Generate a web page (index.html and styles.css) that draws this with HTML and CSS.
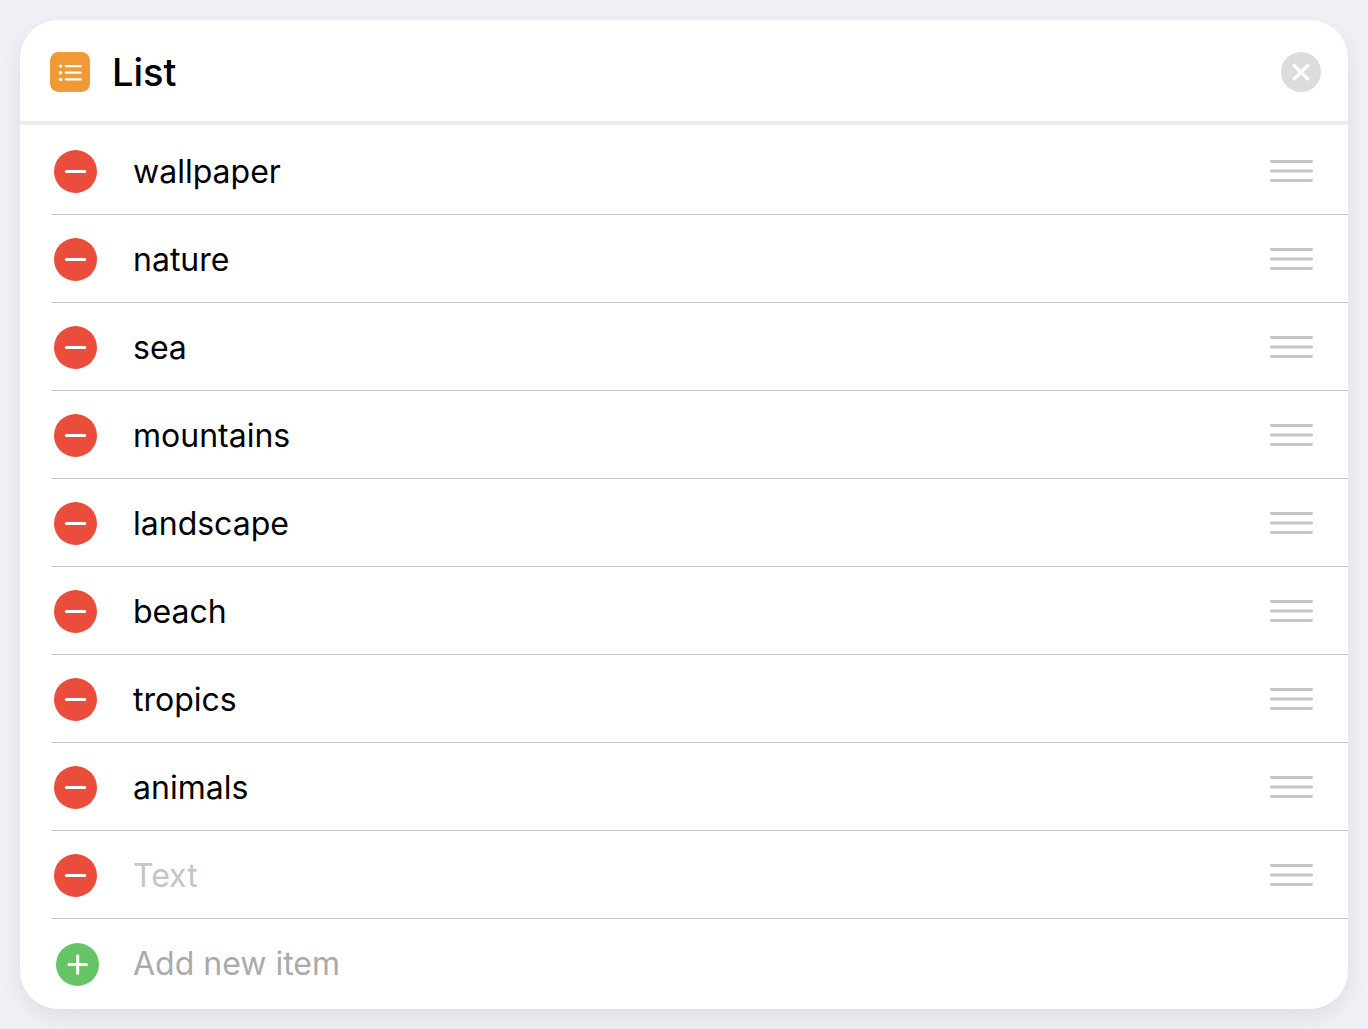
FILE: index.html
```html
<!DOCTYPE html>
<html lang="en">
<head>
<meta charset="utf-8">
<meta name="viewport" content="width=device-width, initial-scale=1">
<title>List</title>
<link rel="stylesheet" href="styles.css">
</head>
<body>
<svg class="sprite">
  <symbol id="minus" viewBox="0 0 43 43"><path d="M12.3 21.5h18.4"/></symbol>
  <symbol id="plus" viewBox="0 0 43 43"><path d="M13 21.5h17.4M21.7 12.8v17.4"/></symbol>
  <symbol id="grip" viewBox="0 0 43 23"><path d="M1.4 1.5h40.2M1.4 11h40.2M1.4 20.5h40.2"/></symbol>
</svg>
<main class="card">
  <header class="card-header">
    <svg class="app-icon" viewBox="0 0 40 40" aria-hidden="true">
      <rect width="40" height="40" rx="8.5" fill="#f09a37"/>
      <g fill="#fff"><circle cx="10.6" cy="14.1" r="1.7"/><circle cx="10.6" cy="20.7" r="1.7"/><circle cx="10.6" cy="27.4" r="1.7"/></g>
      <path d="M15.8 14.1h14.8M15.8 20.7h14.8M15.8 27.4h14.8" stroke="#fff" stroke-width="2.3" stroke-linecap="round"/>
    </svg>
    <h1 class="title">List</h1>
    <button class="close" type="button" aria-label="Close">
      <svg viewBox="0 0 40 40"><path d="M13.3 13.5l13.4 13.4M26.7 13.5L13.3 26.9"/></svg>
    </button>
  </header>
  <ul class="items">
    <li class="row"><button class="dot remove" type="button" aria-label="Remove"><svg><use href="#minus"/></svg></button><input class="text" aria-label="Item 1" value="wallpaper"><button class="grip" type="button" aria-label="Reorder"><svg><use href="#grip"/></svg></button></li>
    <li class="row"><button class="dot remove" type="button" aria-label="Remove"><svg><use href="#minus"/></svg></button><input class="text" aria-label="Item 2" value="nature"><button class="grip" type="button" aria-label="Reorder"><svg><use href="#grip"/></svg></button></li>
    <li class="row"><button class="dot remove" type="button" aria-label="Remove"><svg><use href="#minus"/></svg></button><input class="text" aria-label="Item 3" value="sea"><button class="grip" type="button" aria-label="Reorder"><svg><use href="#grip"/></svg></button></li>
    <li class="row"><button class="dot remove" type="button" aria-label="Remove"><svg><use href="#minus"/></svg></button><input class="text" aria-label="Item 4" value="mountains"><button class="grip" type="button" aria-label="Reorder"><svg><use href="#grip"/></svg></button></li>
    <li class="row"><button class="dot remove" type="button" aria-label="Remove"><svg><use href="#minus"/></svg></button><input class="text" aria-label="Item 5" value="landscape"><button class="grip" type="button" aria-label="Reorder"><svg><use href="#grip"/></svg></button></li>
    <li class="row"><button class="dot remove" type="button" aria-label="Remove"><svg><use href="#minus"/></svg></button><input class="text" aria-label="Item 6" value="beach"><button class="grip" type="button" aria-label="Reorder"><svg><use href="#grip"/></svg></button></li>
    <li class="row"><button class="dot remove" type="button" aria-label="Remove"><svg><use href="#minus"/></svg></button><input class="text" aria-label="Item 7" value="tropics"><button class="grip" type="button" aria-label="Reorder"><svg><use href="#grip"/></svg></button></li>
    <li class="row"><button class="dot remove" type="button" aria-label="Remove"><svg><use href="#minus"/></svg></button><input class="text" aria-label="Item 8" value="animals"><button class="grip" type="button" aria-label="Reorder"><svg><use href="#grip"/></svg></button></li>
    <li class="row"><button class="dot remove" type="button" aria-label="Remove"><svg><use href="#minus"/></svg></button><input class="text" aria-label="Item 9" placeholder="Text"><button class="grip" type="button" aria-label="Reorder"><svg><use href="#grip"/></svg></button></li>
  </ul>
  <button class="add" type="button"><span class="dot"><svg><use href="#plus"/></svg></span><span>Add new item</span></button>
</main>
</body>
</html>
```
FILE: styles.css
```css
* { box-sizing: border-box; }

body {
  margin: 0;
  padding: 20px;
  background: #f1f0f6;
  color: #000;
  font-family: Inter, "Liberation Sans", sans-serif;
  font-size: 32px;
  line-height: 44px;
}

button, input {
  margin: 0;
  padding: 0;
  border: 0;
  background: none;
  font: inherit;
  color: inherit;
}

svg { display: block; }

.sprite { display: none; }

.card {
  background: #fff;
  border-radius: 38px;
  box-shadow: 0 8px 24px rgba(0, 0, 0, 0.08);
}

.card-header {
  display: flex;
  align-items: center;
  height: 105px;
  padding: 2px 27px 0 30px;
  border-bottom: 4px solid #ededed;
}

.app-icon { width: 40px; height: 40px; }

.title {
  flex: 1;
  margin: 0 0 0 22px;
  font-size: 38px;
  font-weight: 500;
}

.close {
  width: 40px;
  height: 40px;
  border-radius: 50%;
  background: #dcdcde;
}

.close svg {
  fill: none;
  stroke: #fff;
  stroke-width: 3.4;
  stroke-linecap: round;
}

.items {
  margin: 0;
  padding: 2px 0 0 32px;
  list-style: none;
}

.row {
  display: flex;
  align-items: center;
  height: 88px;
  padding: 2px 35px 0 2px;
  border-bottom: 1px solid #c6c6c6;
}

.dot {
  flex: none;
  width: 43px;
  height: 43px;
  border-radius: 50%;
  background: #65c466;
}

.remove { background: #eb4d3d; }

.dot svg {
  width: 43px;
  height: 43px;
  fill: none;
  stroke: #fff;
  stroke-width: 3;
  stroke-linecap: round;
}

.text {
  flex: 1;
  min-width: 0;
  height: 44px;
  margin-left: 36px;
  outline: 0;
}

.text::placeholder { color: #c5c5c7; opacity: 1; }

.grip svg {
  width: 43px;
  height: 23px;
  fill: none;
  stroke: #c5c5c7;
  stroke-width: 2.8;
  stroke-linecap: round;
}

.add {
  display: flex;
  align-items: center;
  gap: 34px;
  width: 100%;
  height: 90px;
  padding-left: 36px;
  color: #aaa;
  text-align: left;
}
```
